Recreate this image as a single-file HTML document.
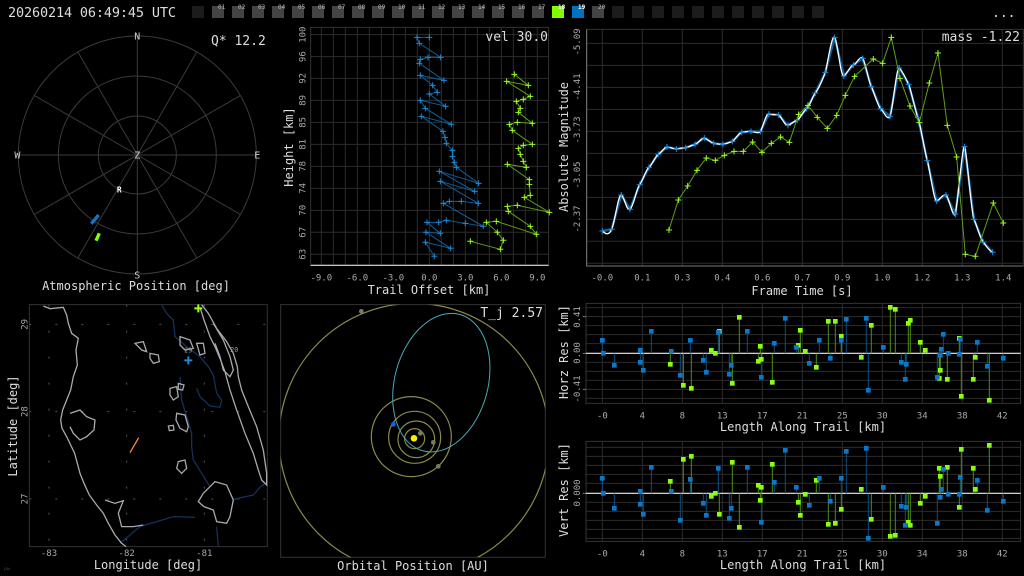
<!DOCTYPE html>
<html><head><meta charset="utf-8"><style>
html,body{margin:0;padding:0;background:#000;width:1024px;height:576px;overflow:hidden}
svg{display:block;font-family:"DejaVu Sans Mono","Liberation Mono",monospace}
.ns{vector-effect:non-scaling-stroke}
</style></head><body>
<svg width="1024" height="576" viewBox="0 0 1024 576" xmlns="http://www.w3.org/2000/svg">
<defs>
<marker id="pb" markerUnits="userSpaceOnUse" markerWidth="24" markerHeight="24" refX="12" refY="12" viewBox="0 0 24 24" overflow="visible"><path d="M3 12H21M12 3V21" stroke="#1a8ad8" stroke-width="3"/></marker>
<marker id="pg" markerUnits="userSpaceOnUse" markerWidth="24" markerHeight="24" refX="12" refY="12" viewBox="0 0 24 24" overflow="visible"><path d="M3 12H21M12 3V21" stroke="#9aff20" stroke-width="3"/></marker>
<marker id="sb" markerUnits="userSpaceOnUse" markerWidth="14" markerHeight="14" refX="7" refY="7" viewBox="0 0 14 14" overflow="visible"><rect x="0" y="0" width="14" height="14" fill="#0a78c8"/></marker>
<marker id="sg" markerUnits="userSpaceOnUse" markerWidth="14" markerHeight="14" refX="7" refY="7" viewBox="0 0 14 14" overflow="visible"><rect x="0" y="0" width="14" height="14" fill="#88ff10"/></marker>
</defs>

<!-- top bar -->
<text x="8" y="17" fill="#ddd" font-size="13.5" textLength="168">20260214 06:49:45 UTC</text>
<g>
<rect x="192" y="6" width="12" height="12" fill="#1c1c1c"/>
<g fill="#444">
<rect x="212" y="6" width="12" height="12"/><rect x="232" y="6" width="12" height="12"/><rect x="252" y="6" width="12" height="12"/><rect x="272" y="6" width="12" height="12"/><rect x="292" y="6" width="12" height="12"/><rect x="312" y="6" width="12" height="12"/><rect x="332" y="6" width="12" height="12"/><rect x="352" y="6" width="12" height="12"/><rect x="372" y="6" width="12" height="12"/><rect x="392" y="6" width="12" height="12"/><rect x="412" y="6" width="12" height="12"/><rect x="432" y="6" width="12" height="12"/><rect x="452" y="6" width="12" height="12"/><rect x="472" y="6" width="12" height="12"/><rect x="492" y="6" width="12" height="12"/><rect x="512" y="6" width="12" height="12"/><rect x="532" y="6" width="12" height="12"/><rect x="592" y="6" width="12" height="12"/>
</g>
<rect x="552" y="6" width="12" height="12" fill="#80ff00"/>
<rect x="572" y="6" width="12" height="12" fill="#0070c0"/>
<g fill="#1c1c1c">
<rect x="612" y="6" width="12" height="12"/><rect x="632" y="6" width="12" height="12"/><rect x="652" y="6" width="12" height="12"/><rect x="672" y="6" width="12" height="12"/><rect x="692" y="6" width="12" height="12"/><rect x="712" y="6" width="12" height="12"/><rect x="732" y="6" width="12" height="12"/><rect x="752" y="6" width="12" height="12"/><rect x="772" y="6" width="12" height="12"/><rect x="792" y="6" width="12" height="12"/><rect x="812" y="6" width="12" height="12"/>
</g>
<g fill="#bbb" font-size="6">
<text x="218" y="9">01</text><text x="238" y="9">02</text><text x="258" y="9">03</text><text x="278" y="9">04</text><text x="298" y="9">05</text><text x="318" y="9">06</text><text x="338" y="9">07</text><text x="358" y="9">08</text><text x="378" y="9">09</text><text x="398" y="9">10</text><text x="418" y="9">11</text><text x="438" y="9">12</text><text x="458" y="9">13</text><text x="478" y="9">14</text><text x="498" y="9">15</text><text x="518" y="9">16</text><text x="538" y="9">17</text><text x="598" y="9">20</text>
<text x="558" y="9" fill="#fff" font-weight="bold">18</text><text x="578" y="9" fill="#fff" font-weight="bold">19</text>
</g>
<text x="992" y="17" fill="#ddd" font-size="13">...</text>
</g>

<!-- polar -->
<g transform="translate(0,25) scale(0.3333)">
<g fill="none" stroke="#3a3a3a" stroke-width="1" class="ns">
<circle cx="412" cy="390" r="117" class="ns"/><circle cx="412" cy="390" r="237" class="ns"/><circle cx="412" cy="390" r="357" class="ns"/>
<path class="ns" d="M412 33V747M55 390H769M233.5 80.8L590.5 699.2M102.8 211.5L721.2 568.5M102.8 568.5L721.2 211.5M233.5 699.2L590.5 80.8"/>
</g>
<g fill="#ccc" font-size="30" text-anchor="middle">
<text x="412" y="43">N</text><text x="412" y="760">S</text><text x="52" y="400">W</text><text x="772" y="400">E</text><text x="412" y="400">Z</text>
</g>
<text x="358" y="502" fill="#fff" font-size="24" text-anchor="middle" font-weight="bold">R</text>
<path d="M274 596L296 570" stroke="#0a78c8" stroke-width="10"/>
<path d="M288 647L298 625" stroke="#80ff00" stroke-width="10"/>
</g>
<text x="211" y="45" fill="#ddd" font-size="13">Q* 12.2</text>
<text x="136" y="290" fill="#ddd" font-size="12" text-anchor="middle">Atmospheric Position [deg]</text>

<!-- trail offset -->
<g transform="translate(280,20) scale(0.3333)">
<g stroke="#2c2c2c" class="ns" fill="none">
<path class="ns" d="M124 22V736M160 22V736M196 22V736M232 22V736M268 22V736M304 22V736M340 22V736M376 22V736M412 22V736M448 22V736M484 22V736M520 22V736M556 22V736M592 22V736M628 22V736M664 22V736M700 22V736M736 22V736M772 22V736"/>
<path class="ns" d="M92 44H806M92 110H806M92 175H806M92 241H806M92 307H806M92 373H806M92 439H806M92 505H806M92 571H806M92 637H806M92 703H806"/>
<rect x="92" y="22" width="714" height="714" class="ns" stroke="#333"/>
</g>
<path d="M92 736H806" stroke="#ddd" class="ns" stroke-width="1.2"/>
<polyline fill="none" stroke="#0d5e9a" class="ns" stroke-width="1" marker-start="url(#pb)" marker-mid="url(#pb)" marker-end="url(#pb)" points="448,52 411,52 418,70 482,112 444,112 421,118 418,130 492,181 421,166 458,196 472,217 448,222 497,259 421,241 436,265 514,313 424,289 489,334 495,352 499,370 517,391 517,409 523,427 529,442 596,490 478,454 584,514 481,484 595,550 544,544 508,544 490,550 610,619 556,610 499,601 476,607 441,607 481,640 438,637 512,685 436,667 463,709"/>
<polyline fill="none" stroke="#5f9e18" class="ns" stroke-width="1" marker-start="url(#pg)" marker-mid="url(#pg)" marker-end="url(#pg)" points="703,163 745,196 680,184 751,229 730,238 709,244 721,265 715,277 757,310 712,307 688,313 697,331 757,373 730,376 715,385 721,403 730,424 739,442 682,433 748,479 748,493 751,526 733,532 808,577 712,556 682,559 685,574 751,619 769,643 649,604 619,607 652,637 670,661 661,688 571,664"/>
<g fill="#aaa" font-size="27" text-anchor="middle">
<text x="124" y="782">-9.0</text><text x="232" y="782">-6.0</text><text x="340" y="782">-3.0</text><text x="448" y="782">0.0</text><text x="556" y="782">3.0</text><text x="664" y="782">6.0</text><text x="772" y="782">9.0</text>
</g>
<g fill="#aaa" font-size="27" text-anchor="middle">
<text transform="translate(76,44) rotate(-90)">100</text><text transform="translate(76,110) rotate(-90)">96</text><text transform="translate(76,175) rotate(-90)">92</text><text transform="translate(76,241) rotate(-90)">89</text><text transform="translate(76,307) rotate(-90)">85</text><text transform="translate(76,373) rotate(-90)">81</text><text transform="translate(76,439) rotate(-90)">78</text><text transform="translate(76,505) rotate(-90)">74</text><text transform="translate(76,571) rotate(-90)">70</text><text transform="translate(76,637) rotate(-90)">67</text><text transform="translate(76,703) rotate(-90)">63</text>
</g>
</g>
<text x="548" y="41" fill="#ddd" font-size="13" text-anchor="end">vel 30.0</text>
<text x="429" y="294" fill="#ddd" font-size="12" text-anchor="middle">Trail Offset [km]</text>
<text transform="translate(293,147) rotate(-90)" fill="#ddd" font-size="12" text-anchor="middle">Height [km]</text>

<!-- magnitude -->
<g transform="translate(580,20) scale(0.3333)">
<g stroke="#2c2c2c" fill="none">
<path class="ns" d="M67 28V738M187 28V738M307 28V738M427 28V738M547 28V738M667 28V738M787 28V738M907 28V738M1027 28V738M1147 28V738M1267 28V738"/>
<path class="ns" d="M20 70H1330M20 136H1330M20 202H1330M20 268H1330M20 334H1330M20 400H1330M20 466H1330M20 532H1330M20 598H1330M20 664H1330M20 730H1330"/>
<rect class="ns" x="20" y="28" width="1310" height="710" stroke="#333"/>
</g>
<path d="M20 28V738H1330" fill="none" stroke="#777" class="ns"/>
<polyline fill="none" stroke="#0d5e9a" class="ns" stroke-width="2.5" points="67,633 95,628 124,525 150,568 179,494 207,442 235,403 261,381 289,387 317,383 345,373 373,354 401,370 429,373 457,364 485,337 513,334 541,335 567,282 596,285 624,316 652,300 680,266 706,219 736,157 764,52 792,168 820,135 848,115 874,200 902,266 930,289 958,144 986,193 1014,293 1042,422 1070,543 1098,525 1126,582 1154,380 1182,598 1210,667 1238,697"/>
<path fill="none" stroke="#fff" class="ns" stroke-width="1.3" stroke-linejoin="round" d="M67,633 C75,640 85,650 95,628 S115,520 124,525 S140,575 150,568 S170,505 179,494 S200,445 207,442 S228,405 235,403 S252,382 261,381 S280,388 289,387 S310,383 317,383 S335,375 345,373 S365,352 373,354 S395,370 401,370 S420,374 429,373 S450,366 457,364 S476,338 485,337 S505,333 513,334 S535,342 541,335 S558,278 567,282 S588,282 596,285 S615,320 624,316 S645,302 652,300 S672,270 680,266 S698,228 706,219 S730,175 736,157 S755,40 764,52 S782,175 792,168 S812,135 820,135 S840,105 848,115 S866,185 874,200 S895,262 902,266 S922,305 930,289 S950,135 958,144 S980,180 986,193 S1008,280 1014,293 S1035,400 1042,422 S1062,545 1070,543 S1090,520 1098,525 S1120,600 1126,582 S1148,365 1154,380 S1175,585 1182,598 S1200,655 1210,667 S1230,695 1238,697"/>
<polyline fill="none" stroke="none" marker-start="url(#pb)" marker-mid="url(#pb)" marker-end="url(#pb)" points="67,633 95,628 124,525 150,568 179,494 207,442 235,403 261,381 289,387 317,383 345,373 373,354 401,370 429,373 457,364 485,337 513,334 541,335 567,282 596,285 624,316 652,300 680,266 706,219 736,157 764,52 792,168 820,135 848,115 874,200 902,266 930,289 958,144 986,193 1014,293 1042,422 1070,543 1098,525 1126,582 1154,380 1182,598 1210,667 1238,697"/>
<polyline fill="none" stroke="#5f9e18" class="ns" stroke-width="1" marker-start="url(#pg)" marker-mid="url(#pg)" marker-end="url(#pg)" points="267,630 295,540 323,498 351,451 379,414 406,421 433,406 462,394 490,394 518,366 546,397 574,370 602,351 628,367 656,283 684,256 712,292 742,325 770,286 796,226 824,169 880,117 908,130 934,52 960,175 990,258 1018,308 1048,189 1074,99 1102,316 1130,411 1156,703 1186,709 1240,549 1270,609"/>
<g fill="#aaa" font-size="27" text-anchor="middle">
<text x="67" y="782">-0.0</text><text x="187" y="782">0.1</text><text x="307" y="782">0.3</text><text x="427" y="782">0.4</text><text x="547" y="782">0.6</text><text x="667" y="782">0.7</text><text x="787" y="782">0.9</text><text x="907" y="782">1.0</text><text x="1027" y="782">1.2</text><text x="1147" y="782">1.3</text><text x="1270" y="782">1.4</text>
</g>
</g>
<g fill="#aaa" font-size="9" text-anchor="middle">
<text transform="translate(580,42) rotate(-90)">-5.09</text><text transform="translate(580,87) rotate(-90)">-4.41</text><text transform="translate(580,130) rotate(-90)">-3.73</text><text transform="translate(580,175) rotate(-90)">-3.05</text><text transform="translate(580,219) rotate(-90)">-2.37</text>
</g>
<text x="1020" y="41" fill="#ddd" font-size="13" text-anchor="end">mass -1.22</text>
<text x="802" y="295" fill="#ddd" font-size="12" text-anchor="middle">Frame Time [s]</text>
<text transform="translate(568,147) rotate(-90)" fill="#ddd" font-size="12" text-anchor="middle">Absolute Magnitude</text>

<!-- map -->
<g transform="translate(0,300) scale(0.3333)">
<rect x="88" y="14" width="714" height="726" fill="none" stroke="#333" class="ns"/>
<g stroke="#555" stroke-dasharray="2 24" class="ns" fill="none">
<path class="ns" d="M88 73H802M88 335H802M88 597H802M147 14V740M380 14V740M613 14V740"/>
</g>
<g fill="none" stroke="#15305a" stroke-width="1.3" class="ns">
<path class="ns" d="M485 14L500 40 520 60 525 110 560 140 600 170 625 200 640 225 650 280 665 300 660 322 630 318 600 290 590 265"/>
<path class="ns" d="M540 230L545 300 560 350 575 400 575 440 580 480 605 520 630 560"/>
<path class="ns" d="M360 730L420 680 470 665 520 650 585 652"/>
<path class="ns" d="M700 598L760 585 782 560 795 550"/>
<path class="ns" d="M650 680L655 740"/>
</g>
<g fill="none" stroke="#aaa" stroke-width="1.3" class="ns">
<path class="ns" d="M130 18L150 26 190 22 200 45 205 70 215 100 235 115 228 150 232 195 220 230 212 270 200 300 188 330 182 360 186 385 200 410 212 435 224 460 232 490 240 520 252 550 268 585 290 615 310 640 325 670 345 705 365 730 378 740"/>
<path class="ns" d="M210 340L240 330 260 350 285 360 282 390 260 410 240 420 220 400 210 380"/>
<path class="ns" d="M315 600L345 610 370 602 355 640 365 680 400 680 430 675"/>
<path class="ns" d="M605 14L625 40 650 85 680 125 700 160 712 200 715 230 725 270 745 320 770 380 790 450 800 520 800 555 785 540 775 510 760 460 735 400 710 330 690 270 675 215 660 175 645 140 630 110 612 60 600 22"/>
<path class="ns" d="M640 70L670 120 690 170 700 210 690 230 670 210 660 170 645 130"/>
<path class="ns" d="M645 545L680 555 700 600 690 650 680 670 650 665 640 630 612 620 595 605 610 580 630 560Z"/>
<path class="ns" d="M450 160L475 165 478 185 460 190 450 175Z"/>
<path class="ns" d="M405 130L430 125 440 155 425 150Z"/>
<path class="ns" d="M540 110L570 120 580 145 555 150 540 135Z"/>
<path class="ns" d="M510 265L530 260 535 290 520 300 510 285Z"/>
<path class="ns" d="M530 340L555 345 565 380 560 395 540 385 528 360Z"/>
<path class="ns" d="M535 485L555 480 560 505 545 520 530 505Z"/>
<path class="ns" d="M505 378L520 376 522 390 508 392Z"/>
<path class="ns" d="M590 130L610 130 615 160 600 165Z"/>
<path class="ns" d="M535 250L552 255 548 270 535 268Z"/>
</g>
<path d="M390 458L416 413" stroke="#ff8840" stroke-width="1.3" class="ns"/>
<path d="M583 25H607M595 13V37" stroke="#9aff20" stroke-width="2" class="ns"/>
<path d="M553 181H577M565 169V193" stroke="#1a8ad8" stroke-width="2" class="ns"/>
<text x="565" y="158" fill="#999" font-size="20" text-anchor="middle">29</text>
<text x="703" y="156" fill="#999" font-size="20" text-anchor="middle">20</text>
<g fill="#aaa" font-size="27" text-anchor="middle">
<text x="147" y="768">-83</text><text x="380" y="768">-82</text><text x="613" y="768">-81</text>
<text transform="translate(82,73) rotate(-90)">29</text><text transform="translate(82,335) rotate(-90)">28</text><text transform="translate(82,597) rotate(-90)">27</text>
</g>
<text x="12" y="810" fill="#444" font-size="14">ρω</text>
</g>
<text x="148" y="569" fill="#ddd" font-size="12" text-anchor="middle">Longitude [deg]</text>
<text transform="translate(17,426) rotate(-90)" fill="#ddd" font-size="12" text-anchor="middle">Latitude [deg]</text>

<!-- orbital -->
<g transform="translate(278,300) scale(0.3333)">
<rect x="8" y="14" width="794" height="758" fill="none" stroke="#333" class="ns"/>
<svg x="8" y="14" width="794" height="758" viewBox="8 14 794 758" overflow="hidden">
<g fill="none" stroke="#8a8a48" stroke-width="1.2">
<circle class="ns" cx="408" cy="415" r="405"/>
<circle class="ns" cx="400" cy="410" r="120"/>
<circle class="ns" cx="410" cy="412" r="78"/>
<circle class="ns" cx="415" cy="418" r="55"/>
<circle class="ns" cx="410" cy="416" r="30"/>
</g>
<ellipse class="ns" cx="490" cy="248" rx="140" ry="212" transform="rotate(15 490 248)" fill="none" stroke="#4aa8b8" stroke-width="1"/>
<g fill="#7a7a60">
<circle cx="250" cy="34" r="7"/><circle cx="427" cy="400" r="7"/><circle cx="466" cy="427" r="7"/><circle cx="481" cy="499" r="7"/>
</g>
<circle cx="408" cy="415" r="10" fill="#ffee00"/>
<circle cx="346" cy="373" r="7" fill="#1060ff"/>
</svg>
</g>
<text x="543" y="317" fill="#ddd" font-size="13" text-anchor="end">T_j 2.57</text>
<text x="413" y="570" fill="#ddd" font-size="12" text-anchor="middle">Orbital Position [AU]</text>

<!-- horizontal residuals -->
<g transform="translate(580,300) scale(0.3333)">
<g stroke="#2c2c2c" fill="none">
<path class="ns" d="M67 10V310M187 10V310M307 10V310M427 10V310M547 10V310M667 10V310M787 10V310M907 10V310M1027 10V310M1147 10V310M1267 10V310"/>
<path class="ns" d="M18 23H1322M18 50H1322M18 77H1322M18 104H1322M18 131H1322M18 187H1322M18 214H1322M18 241H1322M18 268H1322M18 295H1322"/>
<rect class="ns" x="18" y="10" width="1304" height="300" stroke="#333"/>
</g>
<path d="M8 50H18M8 160H18M8 268H18" stroke="#777" class="ns"/>
<path d="M18 160H1322" stroke="#eee" class="ns" stroke-width="1.2"/>
<path class="ns" stroke="#0d4e82" fill="none" d="M67 160V121M103 160V196M181 160V151M181 160V187M190 160V211M214 160V94M274 160V154M301 160V226M331 160V121M370 160V181M379 160V217M415 160V97M448 160V223M454 160V196M502 160V94M544 160V232M583 160V130M616 160V55M649 160V142M688 160V190M718 160V121M751 160V175M784 160V121M799 160V58M859 160V55M865 160V271M910 160V142M964 160V187M976 160V238M979 160V193M1072 160V232M1081 160V166M1084 160V148M1090 160V103M1138 160V163M1141 160V118M1192 160V127M1222 160V199M1270 160V175"/>
<path class="ns" stroke="#4f8e10" fill="none" d="M271 160V193M310 160V256M334 160V265M394 160V151M418 160V94M457 160V250M478 160V52M535 160V184M541 160V139M544 160V178M577 160V247M655 160V136M661 160V91M676 160V154M709 160V202M745 160V64M766 160V64M784 160V109M844 160V172M874 160V76M931 160V22M946 160V28M985 160V70M991 160V61M1021 160V127M1036 160V151M1078 160V235M1081 160V211M1102 160V238M1138 160V115M1144 160V289M1180 160V238M1186 160V172M1228 160V301"/>
<polyline fill="none" stroke="none" marker-start="url(#sg)" marker-mid="url(#sg)" marker-end="url(#sg)" points="271,193 310,256 334,265 394,151 406,160 418,94 457,250 478,52 535,184 541,139 544,178 577,247 655,136 661,91 676,154 709,202 745,64 766,64 784,109 844,172 874,76 931,22 946,28 985,70 991,61 1021,127 1036,151 1078,235 1081,211 1102,238 1138,115 1144,289 1180,238 1186,172 1228,301"/>
<polyline fill="none" stroke="none" marker-start="url(#sb)" marker-mid="url(#sb)" marker-end="url(#sb)" points="67,121 70,160 103,196 181,151 181,187 190,211 214,94 274,154 301,226 331,121 370,181 379,217 415,97 448,223 454,196 502,94 544,232 583,130 616,55 649,142 688,190 718,121 751,175 784,121 799,58 859,55 865,271 910,142 964,187 976,238 979,193 1072,232 1081,166 1084,148 1090,103 1105,160 1138,163 1141,118 1192,127 1222,199 1270,175"/>
<g fill="#aaa" font-size="27" text-anchor="middle">
<text x="67" y="356">-0</text><text x="187" y="356">4</text><text x="307" y="356">8</text><text x="427" y="356">13</text><text x="547" y="356">17</text><text x="667" y="356">21</text><text x="787" y="356">25</text><text x="907" y="356">30</text><text x="1027" y="356">34</text><text x="1147" y="356">38</text><text x="1267" y="356">42</text>
</g>
</g>
<g fill="#aaa" font-size="9" text-anchor="middle">
<text transform="translate(580,317) rotate(-90)">0.41</text><text transform="translate(580,353) rotate(-90)">0.00</text><text transform="translate(580,389) rotate(-90)">-0.41</text>
</g>
<text transform="translate(568,352) rotate(-90)" fill="#ddd" font-size="12" text-anchor="middle">Horz Res [km]</text>
<text x="803" y="431" fill="#ddd" font-size="12" text-anchor="middle">Length Along Trail [km]</text>

<!-- vertical residuals -->
<g transform="translate(580,436) scale(0.3333)">
<g stroke="#2c2c2c" fill="none">
<path class="ns" d="M67 16V316M187 16V316M307 16V316M427 16V316M547 16V316M667 16V316M787 16V316M907 16V316M1027 16V316M1147 16V316M1267 16V316"/>
<path class="ns" d="M18 34H1322M18 61H1322M18 88H1322M18 115H1322M18 142H1322M18 199H1322M18 226H1322M18 253H1322M18 280H1322M18 307H1322"/>
<rect class="ns" x="18" y="16" width="1304" height="300" stroke="#333"/>
</g>
<path d="M8 172H18" stroke="#777" class="ns"/>
<path d="M18 172H1322" stroke="#eee" class="ns" stroke-width="1.2"/>
<path class="ns" stroke="#0d4e82" fill="none" d="M67 172V127M103 172V217M181 172V166M181 172V205M190 172V235M214 172V94M274 172V166M301 172V253M331 172V130M370 172V202M379 172V238M415 172V97M448 172V247M454 172V217M502 172V94M544 172V259M583 172V139M616 172V43M649 172V154M688 172V208M718 172V127M751 172V196M784 172V127M799 172V46M859 172V37M865 172V307M910 172V154M964 172V211M976 172V268M979 172V214M1072 172V262M1081 172V184M1084 172V160M1090 172V100M1105 172V175M1138 172V175M1141 172V124M1192 172V133M1222 172V223M1270 172V196"/>
<path class="ns" stroke="#4f8e10" fill="none" d="M271 172V136M310 172V70M334 172V61M394 172V181M418 172V235M457 172V79M478 172V274M535 172V148M541 172V193M544 172V154M577 172V85M655 172V199M661 172V238M676 172V175M709 172V133M745 172V265M766 172V262M784 172V220M844 172V160M874 172V250M931 172V301M946 172V298M985 172V259M991 172V268M1021 172V202M1036 172V181M1078 172V97M1081 172V121M1102 172V94M1138 172V214M1144 172V40M1180 172V97M1186 172V160M1228 172V28"/>
<polyline fill="none" stroke="none" marker-start="url(#sg)" marker-mid="url(#sg)" marker-end="url(#sg)" points="271,136 310,70 334,61 394,181 406,172 418,235 457,79 478,274 535,148 541,193 544,154 577,85 655,199 661,238 676,175 709,133 745,265 766,262 784,220 844,160 874,250 931,301 946,298 985,259 991,268 1021,202 1036,181 1078,97 1081,121 1102,94 1138,214 1144,40 1180,97 1186,160 1228,28"/>
<polyline fill="none" stroke="none" marker-start="url(#sb)" marker-mid="url(#sb)" marker-end="url(#sb)" points="67,127 70,172 103,217 181,166 181,205 190,235 214,94 274,166 301,253 331,130 370,202 379,238 415,97 448,247 454,217 502,94 544,259 583,139 616,43 649,154 688,208 718,127 751,196 784,127 799,46 859,37 865,307 910,154 964,211 976,268 979,214 1072,262 1081,184 1084,160 1090,100 1105,175 1138,175 1141,124 1192,133 1222,223 1270,196"/>
<g fill="#aaa" font-size="27" text-anchor="middle">
<text x="67" y="362">-0</text><text x="187" y="362">4</text><text x="307" y="362">8</text><text x="427" y="362">13</text><text x="547" y="362">17</text><text x="667" y="362">21</text><text x="787" y="362">25</text><text x="907" y="362">30</text><text x="1027" y="362">34</text><text x="1147" y="362">38</text><text x="1267" y="362">42</text>
</g>
</g>
<text transform="translate(580,493) rotate(-90)" fill="#aaa" font-size="9" text-anchor="middle">0.000</text>
<text transform="translate(568,490) rotate(-90)" fill="#ddd" font-size="12" text-anchor="middle">Vert Res [km]</text>
<text x="803" y="569" fill="#ddd" font-size="12" text-anchor="middle">Length Along Trail [km]</text>
</svg>
</body></html>
